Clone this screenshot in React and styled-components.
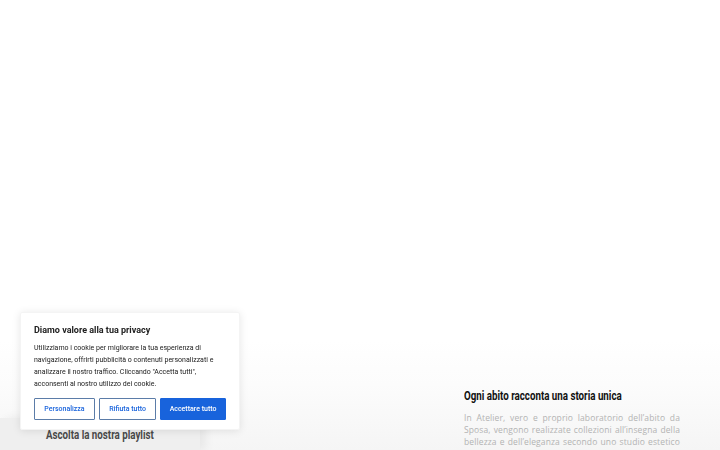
import React from "react";
import styled, { createGlobalStyle } from "styled-components";

const GlobalStyle = createGlobalStyle`
  html, body {
    margin: 0;
    padding: 0;
    height: 100%;
    background: #ffffff;
    font-family: Roboto, "Liberation Sans", sans-serif;
    overflow: hidden;
  }
  #root {
    height: 100%;
  }
`;

const Page = styled.div`
  height: 450px;
  display: flex;
  flex-direction: column;
  overflow: hidden;
`;

const Hero = styled.section`
  flex: 1;
  background: #ffffff;
`;

const Story = styled.section`
  height: 110px;
  flex: none;
  overflow: hidden;
  display: grid;
  grid-template-columns: 200px 1fr;
  grid-template-rows: 110px;
  background: linear-gradient(180deg, #ffffff 0%, #fcfcfc 40%, #f5f5f5 100%);
`;

const PlaylistCol = styled.div`
  display: flex;
  align-items: flex-end;
`;

const PlaylistBar = styled.div`
  width: 100%;
  height: 32px;
  background: #efefef;
  box-shadow: 6px 0 10px rgba(0, 0, 0, 0.06);
  display: flex;
  align-items: center;
  justify-content: center;
`;

const Condensed = styled.span`
  display: inline-block;
  font-family: Roboto, "Liberation Sans", sans-serif;
  font-weight: 700;
  font-size: ${({ $size }) => $size}px;
  color: ${({ $color }) => $color};
  transform: scaleX(0.75);
  transform-origin: ${({ $origin }) => $origin || "left"} center;
  white-space: nowrap;
`;

const TextCol = styled.div`
  display: flex;
  justify-content: flex-end;
  padding: 47px 40px 0 0;
`;

const TextBlock = styled.div`
  width: 216px;
`;

const Heading = styled.h3`
  margin: 0 0 9px;
  line-height: 14px;
`;

const Body = styled.p`
  margin: 0;
  font-family: "Open Sans", sans-serif;
  font-size: 8.5px;
  line-height: 12px;
  letter-spacing: 0.12px;
  color: #b3b3b3;
  text-align: justify;
`;

const Banner = styled.div`
  position: fixed;
  left: 20px;
  bottom: 20px;
  width: 220px;
  box-sizing: border-box;
  padding: 11px 13px 9px;
  background: #ffffff;
  border: 1px solid #f4f4f4;
  border-radius: 2px;
  box-shadow: 0 1px 8px rgba(0, 0, 0, 0.1);
`;

const BannerTitle = styled.h4`
  margin: 0 0 6px;
  font-size: 9px;
  line-height: 12px;
  font-weight: 700;
  color: #212121;
`;

const BannerText = styled.p`
  margin: 0 0 8px;
  font-size: 7px;
  line-height: 12px;
  color: #212121;
`;

const Buttons = styled.div`
  display: flex;
  gap: 4px;
`;

const Btn = styled.button`
  flex: ${({ $grow }) => $grow};
  height: 22px;
  padding: 0;
  box-sizing: border-box;
  font-family: Roboto, "Liberation Sans", sans-serif;
  font-size: 7px;
  font-weight: 500;
  border-radius: 1px;
  border: 1.5px solid ${({ $primary }) => ($primary ? "#1863dc" : "#5b7ca8")};
  background: ${({ $primary }) => ($primary ? "#1863dc" : "#ffffff")};
  color: ${({ $primary }) => ($primary ? "#ffffff" : "#1863dc")};
`;

export default function App() {
  return (
    <>
      <GlobalStyle />
      <Page>
        <Hero />
        <Story>
          <PlaylistCol>
            <PlaylistBar>
              <Condensed $size={13} $color="#4a4a4a" $origin="center">
                Ascolta la nostra playlist
              </Condensed>
            </PlaylistBar>
          </PlaylistCol>
          <TextCol>
            <TextBlock>
              <Heading>
                <Condensed $size={13} $color="#111111">
                  Ogni abito racconta una storia unica
                </Condensed>
              </Heading>
              <Body>
                In Atelier, vero e proprio laboratorio dell’abito da Sposa,
                vengono realizzate collezioni all’insegna della bellezza e
                dell’eleganza secondo uno studio estetico attento ai dettagli e
                alla qualità dei tessuti.
              </Body>
            </TextBlock>
          </TextCol>
        </Story>
      </Page>
      <Banner>
        <BannerTitle>Diamo valore alla tua privacy</BannerTitle>
        <BannerText>
          Utilizziamo i cookie per migliorare la tua esperienza di
          navigazione, offrirti pubblicità o contenuti personalizzati e
          analizzare il nostro traffico. Cliccando "Accetta tutti",
          acconsenti al nostro utilizzo dei cookie.
        </BannerText>
        <Buttons>
          <Btn $grow={61}>Personalizza</Btn>
          <Btn $grow={57}>Rifiuta tutto</Btn>
          <Btn $grow={66} $primary>
            Accettare tutto
          </Btn>
        </Buttons>
      </Banner>
    </>
  );
}
